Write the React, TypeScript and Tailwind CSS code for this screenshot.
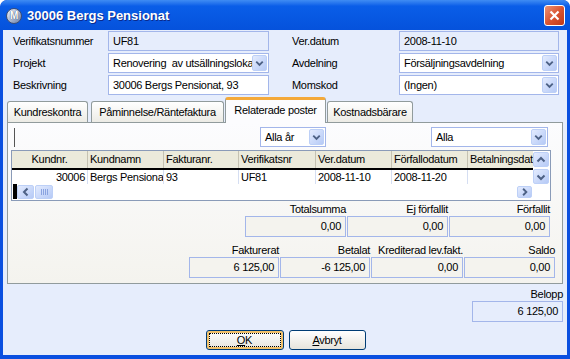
import React from 'react';

type Dir = 'up' | 'down' | 'left' | 'right';
type Tone = 'white' | 'blue' | 'panel';

const Arrow: React.FC<{ dir: Dir }> = ({ dir }) => {
  const points = {
    up: '3.5,8.5 7,5 10.5,8.5',
    down: '3.5,5.5 7,9 10.5,5.5',
    left: '8.5,3.5 5,7 8.5,10.5',
    right: '5.5,3.5 9,7 5.5,10.5',
  }[dir];
  return (
    <svg width="14" height="14" viewBox="0 0 14 14">
      <polyline points={points} fill="none" stroke="#4d6185" strokeWidth="2" />
    </svg>
  );
};

const ScrollButton: React.FC<{ dir: Dir; className: string }> = ({ dir, className }) => (
  <div
    className={`flex shrink-0 items-center justify-center rounded-[2px] border border-[#bdd0f7] bg-linear-to-br from-[#e3ebfe] to-[#b6caf6] ${className}`}
  >
    <Arrow dir={dir} />
  </div>
);

interface FieldProps {
  value: string;
  tone?: Tone;
  combo?: boolean;
  right?: boolean;
  className?: string;
}

const toneClass: Record<Tone, string> = {
  white: 'bg-white',
  blue: 'bg-[#e6edfc]',
  panel: 'bg-[#f4f3ee]',
};

const Field: React.FC<FieldProps> = ({ value, tone = 'blue', combo, right, className = '' }) => (
  <div className={`flex items-center border border-[#a3b6ea] ${toneClass[tone]} ${className}`}>
    <span className={`min-w-0 flex-1 overflow-hidden whitespace-pre px-[4px] ${right ? 'text-right' : ''}`}>
      {value}
    </span>
    {combo && <ScrollButton dir="down" className="mr-[1px] h-[16px] w-[15px]" />}
  </div>
);

const columns = [
  { head: 'Kundnr.', value: '30006', w: 'w-[76px]', headAlign: 'justify-center', cellAlign: 'justify-end' },
  { head: 'Kundnamn', value: 'Bergs Pensionat', w: 'w-[76px]', headAlign: '', cellAlign: '' },
  { head: 'Fakturanr.', value: '93', w: 'w-[75px]', headAlign: '', cellAlign: '' },
  { head: 'Verifikatsnr', value: 'UF81', w: 'w-[77px]', headAlign: '', cellAlign: '' },
  { head: 'Ver.datum', value: '2008-11-10', w: 'w-[76px]', headAlign: '', cellAlign: '' },
  { head: 'Förfallodatum', value: '2008-11-20', w: 'w-[76px]', headAlign: '', cellAlign: '' },
  { head: 'Betalningsdatum', value: '', w: 'w-[65px]', headAlign: '', cellAlign: '' },
];

const Grid = () => (
  <div className="ml-[3px] mt-[3px] flex h-[51px] w-[540px] border border-[#8a9bb8] bg-white">
    <div className="flex w-[521px] flex-col">
      <div className="flex h-[17px] bg-[#ebeadb]">
        {columns.map((c, i) => (
          <div
            key={c.head}
            className={`flex h-full shrink-0 items-center overflow-hidden whitespace-nowrap px-[2px] ${c.w} ${c.headAlign} ${
              i < columns.length - 1 ? 'border-r border-[#c5c2b2]' : ''
            }`}
          >
            {c.head}
          </div>
        ))}
      </div>
      <div className="h-[2px] bg-black" />
      <div className="flex h-[14px]">
        {columns.map((c, i) => (
          <div
            key={c.head}
            className={`flex h-full shrink-0 items-center overflow-hidden whitespace-nowrap px-[2px] ${c.w} ${c.cellAlign} ${
              i < columns.length - 1 ? 'border-r border-[#d5def2]' : ''
            }`}
          >
            {c.value}
          </div>
        ))}
      </div>
      <div className="flex h-[15px] items-center">
        <div className="ml-[1px] h-[15px] w-[4px] bg-black" />
        <ScrollButton dir="left" className="h-[14px] w-[17px]" />
        <div className="ml-[1px] flex h-[14px] w-[18px] items-center justify-center gap-[1px] rounded-[2px] border border-[#bdd0f7] bg-linear-to-br from-[#e3ebfe] to-[#b6caf6]">
          {[0, 1, 2, 3].map(n => (
            <div key={n} className="h-[6px] w-[1px] bg-[#8aa3e0]" />
          ))}
        </div>
        <div className="flex-1" />
        <ScrollButton dir="right" className="mr-[1px] h-[12px] w-[15px]" />
      </div>
    </div>
    <div className="flex w-[17px] flex-col gap-[2px] pt-[1px]">
      <ScrollButton dir="up" className="h-[15px] w-[16px]" />
      <ScrollButton dir="down" className="h-[15px] w-[16px]" />
    </div>
  </div>
);

const Total: React.FC<{ label: string; value: string; w: string }> = ({ label, value, w }) => (
  <div className={`flex shrink-0 flex-col ${w}`}>
    <div className="flex h-[14px] items-center justify-end whitespace-nowrap">{label}</div>
    <Field value={value} tone="panel" right className="h-[21px]" />
  </div>
);

const tabs = [
  { label: 'Kundreskontra', w: 'w-[81px]' },
  { label: 'Påminnelse/Räntefaktura', w: 'w-[133px]' },
  { label: 'Relaterade poster', w: 'w-[101px]', active: true },
  { label: 'Kostnadsbärare', w: 'w-[86px]' },
];

export default function App() {
  return (
    <div className="flex h-[359px] w-[570px] flex-col overflow-hidden rounded-t-[7px] bg-[#0a4fe0] font-['Liberation_Sans',Arial,sans-serif] text-[11px] leading-none tracking-[-0.3px] text-black">
      {/* title bar */}
      <div className="flex h-[30px] shrink-0 items-center rounded-t-[7px] bg-linear-to-b from-[#3f8cf3] via-[#0a5ee8] via-20% to-[#0552dc]">
        <div className="ml-[6px] mt-[2px] flex h-[16px] w-[16px] items-center justify-center rounded-full border border-[#3d4d74] bg-linear-to-br from-[#f4f7fc] to-[#6b7fa8]">
          <span className="text-[10px] font-bold text-white [text-shadow:0_0_1px_#1c2a4c]">M</span>
        </div>
        <span className="ml-[5px] text-[13px] font-bold tracking-normal text-white [text-shadow:1px_1px_0_#0b2a8a]">
          30006 Bergs Pensionat
        </span>
        <div className="ml-auto mr-[5px] flex h-[21px] w-[21px] items-center justify-center rounded-[3px] border border-white bg-linear-to-br from-[#eb9274] via-[#da5532] to-[#c03717]">
          <svg width="11" height="11" viewBox="0 0 11 11">
            <path d="M1.5 1.5 L9.5 9.5 M9.5 1.5 L1.5 9.5" stroke="white" strokeWidth="2.2" />
          </svg>
        </div>
      </div>

      {/* body */}
      <div className="mx-[3px] flex h-[325px] shrink-0 flex-col bg-[#e6edfc]">
        <div className="grid grid-cols-[95px_161px_130px_160px] items-center gap-y-[2px] pl-[10px] pt-[1px]">
          <span>Verifikatsnummer</span>
          <Field value="UF81" className="h-[20px]" />
          <span className="pl-[23px]">Ver.datum</span>
          <Field value="2008-11-10" className="h-[20px]" />

          <span>Projekt</span>
          <Field value="Renovering  av utsällningslokal" tone="white" combo className="h-[20px]" />
          <span className="pl-[23px]">Avdelning</span>
          <Field value="Försäljningsavdelning" tone="white" combo className="h-[20px]" />

          <span>Beskrivning</span>
          <Field value="30006 Bergs Pensionat, 93" tone="white" className="h-[20px]" />
          <span className="pl-[23px]">Momskod</span>
          <Field value="(Ingen)" tone="white" combo className="h-[20px]" />
        </div>

        {/* tabs */}
        <div className="mt-[2px] flex h-[25px] items-end pl-[4px]">
          {tabs.map((t, i) =>
            t.active ? (
              <div
                key={t.label}
                className={`relative z-10 -mb-[1px] ml-[1px] flex h-[26px] shrink-0 items-center justify-center rounded-t-[3px] border-x border-t-[3px] border-x-[#919b9c] border-t-[#f4a93a] bg-[#fcfcfe] pb-[2px] ${t.w}`}
              >
                {t.label}
              </div>
            ) : (
              <div
                key={t.label}
                className={`flex h-[21px] shrink-0 items-center justify-center rounded-t-[3px] border-x border-t border-[#919b9c] bg-linear-to-b from-white to-[#ecebe5] ${t.w} ${
                  i === 1 ? 'ml-[3px]' : i === 3 ? 'ml-[1px]' : ''
                }`}
              >
                {t.label}
              </div>
            ),
          )}
        </div>

        {/* tab panel */}
        <div className="ml-[4px] flex h-[162px] w-[556px] flex-col border border-[#919b9c] bg-linear-to-b from-[#fcfcfe] to-[#f4f3ee]">
          <div className="mt-[4px] flex h-[20px] items-center">
            <div className="ml-[6px] h-[19px] w-[1px] bg-[#555]" />
            <Field value="Alla år" tone="white" combo className="ml-[245px] h-[20px] w-[66px]" />
            <Field value="Alla" tone="white" combo className="ml-[105px] h-[20px] w-[117px]" />
          </div>

          <Grid />

          <div className="ml-[237px] mt-[1px] flex gap-[1px]">
            <Total label="Totalsumma" value="0,00" w="w-[101px]" />
            <Total label="Ej förfallit" value="0,00" w="w-[101px]" />
            <Total label="Förfallit" value="0,00" w="w-[101px]" />
          </div>

          <div className="ml-[181px] mt-[6px] flex gap-[1px]">
            <Total label="Fakturerat" value="6 125,00" w="w-[90px]" />
            <Total label="Betalat" value="-6 125,00" w="w-[90px]" />
            <Total label="Krediterad lev.fakt." value="0,00" w="w-[92px]" />
            <Total label="Saldo" value="0,00" w="w-[91px]" />
          </div>
        </div>

        {/* belopp */}
        <div className="mr-[4px] mt-[4px] flex flex-col items-end">
          <div className="flex h-[13px] items-center">Belopp</div>
          <Field value="6 125,00" right className="h-[21px] w-[91px]" />
        </div>

        {/* buttons */}
        <div className="mt-[8px] flex justify-center gap-[5px] pl-[1px]">
          <button className="h-[20px] w-[78px] rounded-[3px] border border-[#003c74] bg-linear-to-b from-white to-[#e6e4dc] p-[2px] shadow-[inset_0_0_0_2px_#f3c26a]">
            <div className="flex h-full items-center justify-center border border-dotted border-black">
              <span>
                <span className="underline underline-offset-[1px]">O</span>K
              </span>
            </div>
          </button>
          <button className="flex h-[20px] w-[77px] items-center justify-center rounded-[3px] border border-[#003c74] bg-linear-to-b from-white to-[#e6e4dc]">
            <span>
              <span className="underline underline-offset-[1px]">A</span>vbryt
            </span>
          </button>
        </div>
      </div>
    </div>
  );
}
